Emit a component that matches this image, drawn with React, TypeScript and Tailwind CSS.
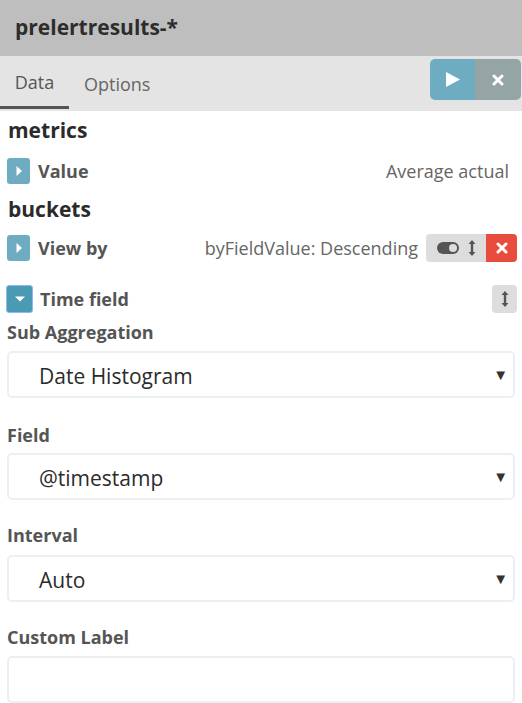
const font = { fontFamily: '"Open Sans", "Liberation Sans", sans-serif' };

function Caret({ down = false, active = false }: { down?: boolean; active?: boolean }) {
  return (
    <div
      className={
        active
          ? "w-[27px] h-[28px] rounded-[3px] bg-[#4a9ab3] border border-[#8fb8ee] flex items-center justify-center"
          : "w-[23px] h-[26px] rounded-[3px] bg-[#6eadc1] flex items-center justify-center"
      }
    >
      {down ? (
        <svg width="12" height="8" viewBox="0 0 12 8">
          <path d="M1 1.5h10L6 6.5z" fill="#fff" />
        </svg>
      ) : (
        <svg width="8" height="12" viewBox="0 0 8 12">
          <path d="M1.5 1v10l5.5-5z" fill="#fff" />
        </svg>
      )}
    </div>
  );
}

function SortIcon() {
  return (
    <svg width="8" height="18" viewBox="0 0 8 18">
      <path d="M4 1L7.5 5h-2.3v8h2.3L4 17 0.5 13h2.3V5H0.5z" fill="#555" />
    </svg>
  );
}

function Times({ size = 12 }: { size?: number }) {
  return (
    <svg width={size} height={size} viewBox="0 0 12 12">
      <path d="M2 2l8 8M10 2l-8 8" stroke="#fff" strokeWidth="3" strokeLinecap="round" />
    </svg>
  );
}

function Select({ value }: { value: string }) {
  return (
    <div className="mx-[7px] h-[47px] border-2 border-[#ecf0f1] rounded-[5px] flex items-center pl-[30px] pr-[5px] bg-white">
      <span className="flex-1 pt-[4px] text-[21px] text-[#2b2b2b]">{value}</span>
      <span className="text-[15px] text-[#333]">▼</span>
    </div>
  );
}

function Label({ children, mt }: { children: string; mt: string }) {
  return (
    <div className={`${mt} h-[28px] px-[7px] flex items-center text-[18px] font-bold text-[#555]`}>{children}</div>
  );
}

export default function App() {
  return (
    <div style={font} className="w-[522px] h-[703px] bg-white overflow-hidden">
      {/* header */}
      <div className="h-[56px] bg-[#bebebe] flex items-center px-[15px]">
        <h1 className="text-[21px] font-bold text-[#2d2d2d]">prelertresults-*</h1>
      </div>

      {/* tabs */}
      <div className="h-[55px] bg-[#e4e4e4] flex items-start justify-between">
        <div className="flex h-full">
          <div className="w-[69px] h-[53px] flex items-center justify-center border-b-[3px] border-[#555] text-[18px] text-[#555] pt-[3px]">
            Data
          </div>
          <div className="px-[15px] h-[53px] flex items-center text-[18px] text-[#666] pt-[3px]">Options</div>
        </div>
        <div className="mt-[3px] mr-[1px] flex h-[41px] rounded-[5px] overflow-hidden">
          <div className="w-[45px] bg-[#6eadc1] flex items-center justify-center">
            <svg width="15" height="15" viewBox="0 0 15 15">
              <path d="M1 0v15l14-7.5z" fill="#fff" />
            </svg>
          </div>
          <div className="w-[46px] bg-[#95a5a6] flex items-center justify-center">
            <Times size={12} />
          </div>
        </div>
      </div>

      {/* metrics */}
      <div className="h-[40px] px-[8px] flex items-center text-[21px] font-bold text-[#2b2b2b]">metrics</div>
      <div className="h-[40px] pl-[7px] pr-[13px] flex items-center gap-[8px]">
        <Caret />
        <span className="text-[18px] font-bold text-[#555]">Value</span>
        <span className="ml-auto text-[18px] text-[#666]">Average actual</span>
      </div>

      {/* buckets */}
      <div className="h-[37px] px-[8px] flex items-center text-[21px] font-bold text-[#2b2b2b]">buckets</div>
      <div className="h-[40px] pl-[7px] pr-[5px] flex items-center gap-[8px]">
        <Caret />
        <span className="text-[18px] font-bold text-[#555]">View by</span>
        <span className="ml-auto text-[18px] text-[#666]">byFieldValue: Descending</span>
        <div className="flex h-[28px] rounded-[4px] overflow-hidden">
          <div className="w-[60px] bg-[#dddddd] flex items-center justify-around px-[6px]">
            <svg width="22" height="12" viewBox="0 0 22 12">
              <rect x="0" y="0" width="22" height="12" rx="6" fill="#555" />
              <circle cx="16" cy="6" r="4" fill="#ddd" />
            </svg>
            <SortIcon />
          </div>
          <div className="w-[31px] bg-[#e74c3c] flex items-center justify-center">
            <Times size={12} />
          </div>
        </div>
      </div>

      {/* time field */}
      <div className="mt-[16px] h-[30px] pl-[6px] pr-[5px] flex items-center gap-[7px]">
        <Caret down active />
        <span className="text-[18px] font-bold text-[#555]">Time field</span>
        <div className="ml-auto w-[25px] h-[28px] rounded-[4px] bg-[#dddddd] flex items-center justify-center">
          <SortIcon />
        </div>
      </div>

      <Label mt="mt-[4px]">Sub Aggregation</Label>
      <div className="mt-[5px]">
        <Select value="Date Histogram" />
      </div>

      <Label mt="mt-[23px]">Field</Label>
      <div className="mt-[4px]">
        <Select value="@timestamp" />
      </div>

      <Label mt="mt-[21px]">Interval</Label>
      <div className="mt-[6px]">
        <Select value="Auto" />
      </div>

      <Label mt="mt-[21px]">Custom Label</Label>
      <div className="mt-[5px] mx-[7px] h-[47px] border-2 border-[#ecf0f1] rounded-[5px] bg-white" />
    </div>
  );
}
